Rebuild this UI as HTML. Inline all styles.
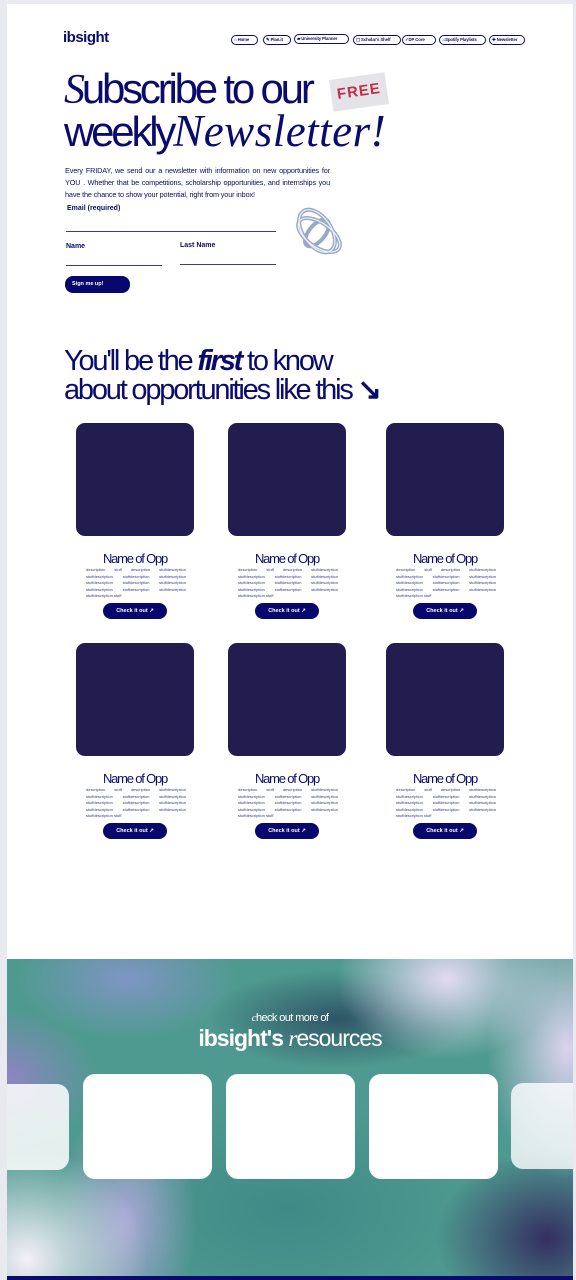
<!DOCTYPE html>
<html><head><meta charset="utf-8"><style>
*{margin:0;padding:0;box-sizing:border-box}
html,body{width:576px;height:1280px;overflow:hidden}
body{background:#e9eaf0;position:relative;font-family:"Liberation Sans",sans-serif;color:#0b0b6e}
.a{position:absolute}
.page{position:absolute;left:7px;top:4px;width:566px;height:1272px;background:#fff}
.nav{position:absolute;top:35px;height:10px;border:1px solid #0b0b6e;border-radius:6px;font-size:4.3px;font-weight:bold;line-height:8px;padding:0 2px;white-space:nowrap;letter-spacing:-0.1px}
.card{position:absolute;width:118px;height:113px;background:#231c4f;border-radius:9px}
.nm{position:absolute;width:140px;text-align:center;font-size:13px;letter-spacing:-1.2px}
.ds{position:absolute;width:100px;font-size:4px;line-height:6.5px;text-align:justify;color:#333a8a}
.bt{position:absolute;width:64px;height:16px;background:#07076e;border-radius:8px;color:#fff;font-size:5.5px;font-weight:bold;text-align:center;line-height:16px}
.rc{position:absolute;background:#fff;border-radius:12px}
</style></head><body>
<div class="page"></div>
<div class="a" style="left:63px;top:29px;font-size:15px;font-weight:900;letter-spacing:-0.5px">ib<span>sight</span></div>
<div class="nav" style="left:231px;width:27px">⌂ Home</div>
<div class="nav" style="left:263px;width:28px">✎ Plan.it</div>
<div class="nav" style="left:294px;top:34px;width:55px">▰ University Planner</div>
<div class="nav" style="left:353px;width:48px">▢ Scholar's Shelf</div>
<div class="nav" style="left:402px;width:34px">✓DP Core</div>
<div class="nav" style="left:439px;width:47px">♫Spotify Playlists</div>
<div class="nav" style="left:489px;width:36px">✚ Newsletter</div>
<div class="a" style="left:64px;top:68px;font-size:42px;letter-spacing:-3.2px;line-height:42px"><span style="font-family:'Liberation Serif',serif;font-style:italic">S</span>ubscribe to our</div>
<div class="a" style="left:331px;top:76px;width:56px;height:32px;background:#e4e4e8;transform:rotate(-8deg);color:#c0304a;font-weight:900;font-size:15px;text-align:center;line-height:32px;letter-spacing:1px">FREE</div>
<div class="a" style="left:64px;top:108px;font-size:42px;letter-spacing:-3.2px;line-height:46px">weekly<span style="font-family:'Liberation Serif',serif;font-style:italic;letter-spacing:0.5px;font-size:45px">Newsletter!</span></div>
<div class="a" style="left:65px;top:165px;width:265px;font-size:7.3px;line-height:12px;text-align:justify;letter-spacing:-0.15px">Every FRIDAY, we send our a newsletter with information on new opportunities for YOU . Whether that be competitions, scholarship opportunities, and internships you have the chance to show your potential, right from your inbox!</div>
<div class="a" style="left:67px;top:205px;font-size:7px;font-weight:bold">Email (required)</div>
<div class="a" style="left:66px;top:231px;width:210px;height:1px;background:#3a3a90"></div>
<div class="a" style="left:66px;top:243px;font-size:7px;font-weight:bold">Name</div>
<div class="a" style="left:180px;top:242px;font-size:7px;font-weight:bold">Last Name</div>
<div class="a" style="left:66px;top:265px;width:96px;height:1px;background:#3a3a90"></div>
<div class="a" style="left:180px;top:264px;width:96px;height:1px;background:#3a3a90"></div>
<div class="bt" style="left:65px;top:276px;width:65px;height:17px;line-height:17px;text-align:left;padding-left:7px">Sign me up!</div>
<svg class="a" style="left:287px;top:203px" width="66" height="60" viewBox="0 0 66 60"><g fill="none" stroke="#9aa8c8" stroke-width="4"><ellipse cx="30" cy="28" rx="14" ry="24" transform="rotate(-35 30 28)"/><ellipse cx="32" cy="32" rx="24" ry="12" transform="rotate(35 32 32)"/><ellipse cx="30" cy="30" rx="8" ry="16" transform="rotate(40 30 30)"/></g><g fill="none" stroke="#eef2fa" stroke-width="1.2"><ellipse cx="30" cy="28" rx="14" ry="24" transform="rotate(-35 30 28)"/><ellipse cx="32" cy="32" rx="24" ry="12" transform="rotate(35 32 32)"/></g></svg>
<div class="a" style="left:64px;top:347px;font-size:29px;letter-spacing:-2.2px;line-height:29px">You'll be the <b><i>first</i></b> to know<br>about opportunities like this <span style="font-weight:900">↘</span></div>

<div class="card" style="left:76px;top:423px"></div><div class="card" style="left:228px;top:423px"></div><div class="card" style="left:386px;top:423px"></div>
<div class="card" style="left:76px;top:643px"></div><div class="card" style="left:228px;top:643px"></div><div class="card" style="left:386px;top:643px"></div>

<div class="nm" style="left:65px;top:551px">Name of Opp</div><div class="nm" style="left:217px;top:551px">Name of Opp</div><div class="nm" style="left:375px;top:551px">Name of Opp</div>
<div class="nm" style="left:65px;top:771px">Name of Opp</div><div class="nm" style="left:217px;top:771px">Name of Opp</div><div class="nm" style="left:375px;top:771px">Name of Opp</div>

<div class="ds" style="left:86px;top:567px">description stuff description stuffdescription stuffdescription stuffdescription stuffdescription stuffdescription stuffdescription stuffdescription stuffdescription stuffdescription stuffdescription stuffdescription stuff</div>
<div class="ds" style="left:238px;top:567px">description stuff description stuffdescription stuffdescription stuffdescription stuffdescription stuffdescription stuffdescription stuffdescription stuffdescription stuffdescription stuffdescription stuffdescription stuff</div>
<div class="ds" style="left:396px;top:567px">description stuff description stuffdescription stuffdescription stuffdescription stuffdescription stuffdescription stuffdescription stuffdescription stuffdescription stuffdescription stuffdescription stuffdescription stuff</div>
<div class="ds" style="left:86px;top:787px">description stuff description stuffdescription stuffdescription stuffdescription stuffdescription stuffdescription stuffdescription stuffdescription stuffdescription stuffdescription stuffdescription stuffdescription stuff</div>
<div class="ds" style="left:238px;top:787px">description stuff description stuffdescription stuffdescription stuffdescription stuffdescription stuffdescription stuffdescription stuffdescription stuffdescription stuffdescription stuffdescription stuffdescription stuff</div>
<div class="ds" style="left:396px;top:787px">description stuff description stuffdescription stuffdescription stuffdescription stuffdescription stuffdescription stuffdescription stuffdescription stuffdescription stuffdescription stuffdescription stuffdescription stuff</div>

<div class="bt" style="left:103px;top:603px">Check it out ↗</div><div class="bt" style="left:255px;top:603px">Check it out ↗</div><div class="bt" style="left:413px;top:603px">Check it out ↗</div>
<div class="bt" style="left:103px;top:823px">Check it out ↗</div><div class="bt" style="left:255px;top:823px">Check it out ↗</div><div class="bt" style="left:413px;top:823px">Check it out ↗</div>

<div class="a" style="left:7px;top:959px;width:566px;height:317px;overflow:hidden;background:#4f9a90">
<div class="a" style="left:0;top:0;width:566px;height:317px;background:
radial-gradient(ellipse 90px 70px at 0px 120px,rgba(150,130,200,0.9),transparent),
radial-gradient(ellipse 120px 110px at 20px 300px,#f4f0f8,transparent),
radial-gradient(ellipse 70px 120px at 120px 260px,rgba(190,170,230,0.8),transparent),
radial-gradient(ellipse 110px 80px at 440px 20px,#e3daf2,transparent),
radial-gradient(ellipse 80px 130px at 560px 90px,#ddd3ee,transparent),
radial-gradient(ellipse 110px 90px at 540px 280px,#332f60,transparent),
radial-gradient(ellipse 130px 50px at 330px 60px,#2f5566,transparent),
radial-gradient(ellipse 110px 60px at 120px 20px,#7f95c4,transparent),
radial-gradient(ellipse 200px 120px at 280px 250px,#3f8a86,transparent),
#4f9a90"></div>
<div class="a" style="left:0;top:53px;width:566px;text-align:center;color:#fff;font-size:11px;letter-spacing:-0.6px"><i style="font-family:'Liberation Serif',serif">c</i>heck out more of</div>
<div class="a" style="left:0;top:66px;width:566px;text-align:center;color:#fff;font-size:23px;letter-spacing:-1px"><b style="font-weight:900">ibsight's</b> <i style="font-family:'Liberation Serif',serif">r</i>esources</div>
<div class="rc" style="left:-10px;top:125px;width:72px;height:86px;opacity:0.85"></div>
<div class="rc" style="left:76px;top:115px;width:129px;height:105px"></div>
<div class="rc" style="left:219px;top:115px;width:129px;height:105px"></div>
<div class="rc" style="left:362px;top:115px;width:129px;height:105px"></div>
<div class="rc" style="left:504px;top:124px;width:80px;height:86px;opacity:0.8"></div>
</div>
<div class="a" style="left:7px;top:1276px;width:566px;height:4px;background:#0b0b6e"></div>
</body></html>
